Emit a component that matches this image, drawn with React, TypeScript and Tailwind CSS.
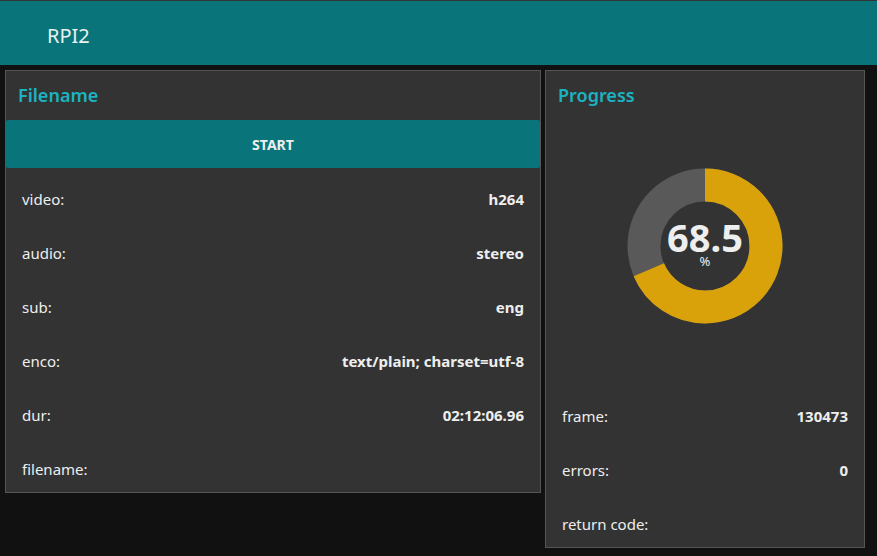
import React from "react"

const font = { fontFamily: '"Segoe UI", "Noto Sans", "Open Sans", sans-serif' }

type RowProps = { label: string; value?: string }

const Row = ({ label, value }: RowProps) => (
    <div className="flex h-[48px] items-center justify-between px-4 pt-[2px] text-[15px] text-[#eeeeee]">
        <span>{label}</span>
        <span className="font-bold">{value}</span>
    </div>
)

const Gauge = ({ value }: { value: number }) => {
    const r = 61
    const c = 2 * Math.PI * r
    const filled = (value / 100) * c
    return (
        <div className="relative h-[156px] w-[156px]">
            <svg width="156" height="156" viewBox="0 0 156 156">
                <circle cx="78" cy="78" r={r} fill="none" stroke="#595959" strokeWidth="33" />
                <circle
                    cx="78"
                    cy="78"
                    r={r}
                    fill="none"
                    stroke="#d9a20b"
                    strokeWidth="33"
                    strokeDasharray={`${filled} ${c}`}
                    transform="rotate(-90 78 78)"
                />
            </svg>
            <div className="absolute inset-0 flex flex-col items-center justify-center pb-[4px] text-[#eeeeee]">
                <span className="text-[38px] font-bold leading-[36px]">{value}</span>
                <span className="text-[13px] leading-[13px]">%</span>
            </div>
        </div>
    )
}

export default function App() {
    return (
        <div className="min-h-[556px] bg-[#111111]" style={font}>
            <div className="h-[65px] border-t border-[#333333] bg-[#097479] pl-[47px] pt-[20px] text-[20px] text-[#e8f0f0]">
                RPI2
            </div>
            <div className="flex items-start gap-[4px] pl-[5px] pt-[5px]">
                <div className="w-[536px] border border-[#555555] bg-[#333333]">
                    <h2 className="h-[49px] pl-[12px] pt-[11px] text-[18px] font-semibold text-[#1bb3c1]">Filename</h2>
                    <button className="mb-[6px] h-[48px] w-full rounded-[2px] bg-[#097479] text-[14px] font-bold text-[#eeeeee]">
                        START
                    </button>
                    <div className="flex flex-col gap-[6px]">
                        <Row label="video:" value="h264" />
                        <Row label="audio:" value="stereo" />
                        <Row label="sub:" value="eng" />
                        <Row label="enco:" value="text/plain; charset=utf-8" />
                        <Row label="dur:" value="02:12:06.96" />
                        <Row label="filename:" />
                    </div>
                </div>
                <div className="w-[320px] border border-[#555555] bg-[#333333]">
                    <h2 className="h-[49px] pl-[12px] pt-[11px] text-[18px] font-semibold text-[#1bb3c1]">Progress</h2>
                    <div className="flex h-[271px] items-center justify-center pb-[20px]">
                        <Gauge value={68.5} />
                    </div>
                    <div className="flex flex-col gap-[6px]">
                        <Row label="frame:" value="130473" />
                        <Row label="errors:" value="0" />
                        <Row label="return code:" />
                    </div>
                </div>
            </div>
        </div>
    )
}
